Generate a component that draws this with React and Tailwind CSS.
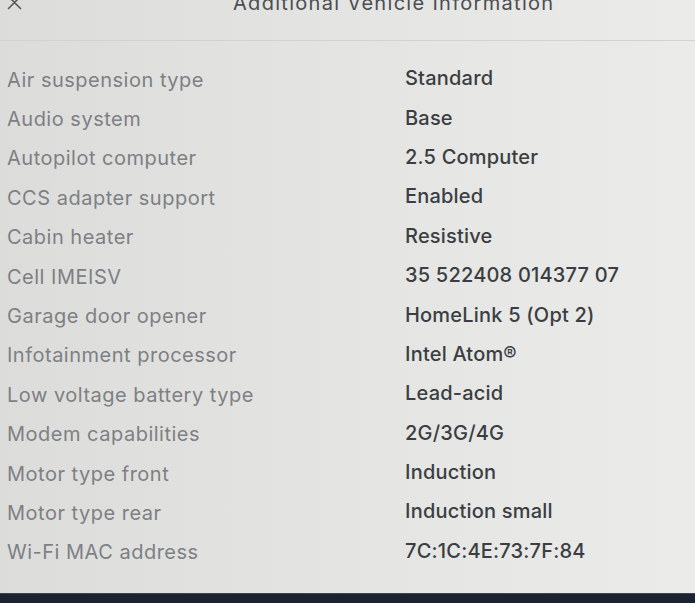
import React from "react";

const rows = [
  ["Air suspension type", "Standard"],
  ["Audio system", "Base"],
  ["Autopilot computer", "2.5 Computer"],
  ["CCS adapter support", "Enabled"],
  ["Cabin heater", "Resistive"],
  ["Cell IMEISV", "35 522408 014377 07"],
  ["Garage door opener", "HomeLink 5 (Opt 2)"],
  ["Infotainment processor", "Intel Atom®"],
  ["Low voltage battery type", "Lead-acid"],
  ["Modem capabilities", "2G/3G/4G"],
  ["Motor type front", "Induction"],
  ["Motor type rear", "Induction small"],
  ["Wi-Fi MAC address", "7C:1C:4E:73:7F:84"],
];

export default function App() {
  return (
    <div className="w-[695px] h-[603px] overflow-hidden flex flex-col bg-gradient-to-r from-[#dcdcda] via-[#e4e4e2] to-[#ebebe9] font-['Inter',sans-serif]">
      {/* header */}
      <div className="h-[41px] shrink-0 relative border-b border-[#d2d2d0]">
        <div className="absolute left-[7px] -top-[5px] text-[#55595d]">
          <svg width="15" height="15" viewBox="0 0 15 15" fill="none">
            <path d="M1.5 1.5L13.5 13.5M13.5 1.5L1.5 13.5" stroke="currentColor" strokeWidth="1.6" strokeLinecap="round" />
          </svg>
        </div>
        <div className="absolute left-[233px] -top-[9px] text-[20px] leading-[24px] text-[#4a4e52] tracking-[1.3px] whitespace-nowrap">
          Additional Vehicle Information
        </div>
      </div>

      {/* info rows */}
      <div className="flex flex-col pt-[19px] px-[7px]">
        {rows.map(([label, value]) => (
          <div key={label} className="h-[39.4px] flex items-center text-[20px]">
            <div className="w-[398px] text-[#7d8084] tracking-[0.5px]">{label}</div>
            <div className="text-[#3a3e42] font-medium tracking-[0.2px] -mt-[3px]">{value}</div>
          </div>
        ))}
      </div>

      <div className="flex-1" />
      <div className="h-[10px] shrink-0 bg-[#1b2330] border-t border-[#3a4656]" />
    </div>
  );
}
